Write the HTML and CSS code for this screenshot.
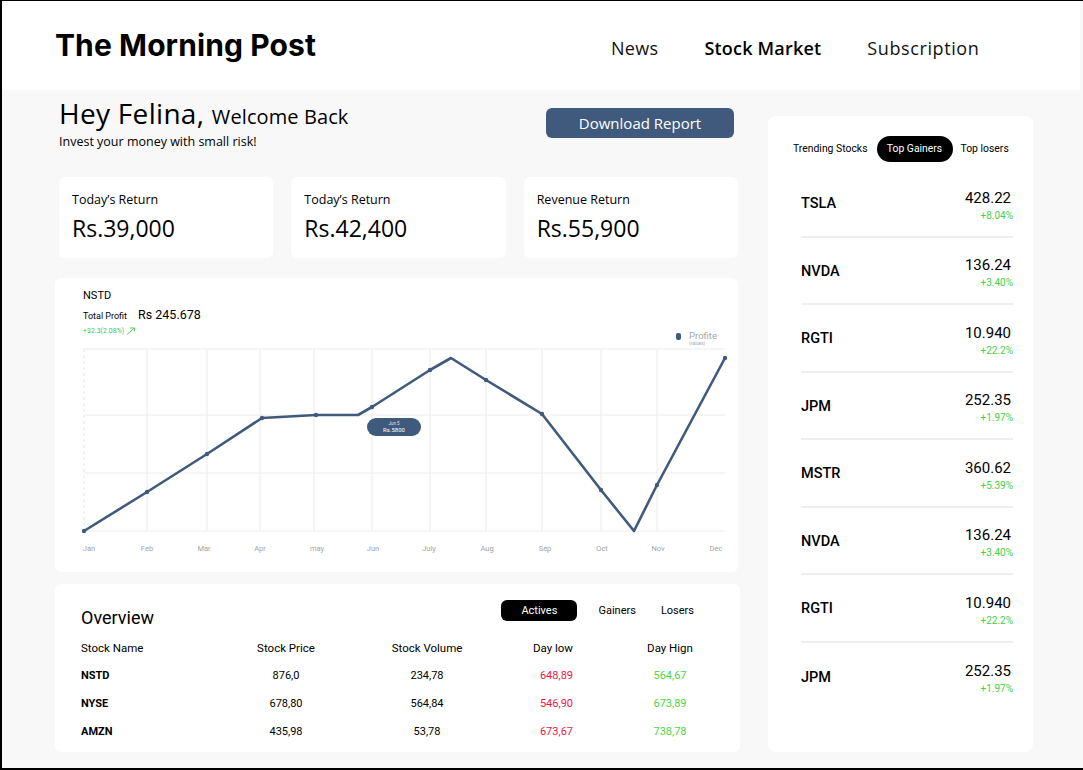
FILE: index.html
```html
<!DOCTYPE html>
<html lang="en">
<head>
<meta charset="utf-8">
<title>The Morning Post</title>
<link rel="stylesheet" href="styles.css">
</head>
<body>
<div class="frame">
  <header class="topbar">
    <div class="brand">The Morning Post</div>
    <nav class="nav">
      <a class="nav-link">News</a>
      <a class="nav-link active">Stock Market</a>
      <a class="nav-link">Subscription</a>
    </nav>
  </header>

  <main class="main">
    <section class="left">
      <div class="greet-row">
        <div class="greet">
          <h1 class="hello">Hey Felina, <span class="welcome">Welcome Back</span></h1>
          <p class="sub">Invest your money with small risk!</p>
        </div>
        <button class="btn">Download Report</button>
      </div>

      <div class="cards">
        <div class="card">
          <div class="card-label">Today’s Return</div>
          <div class="card-value">Rs.39,000</div>
        </div>
        <div class="card">
          <div class="card-label">Today’s Return</div>
          <div class="card-value">Rs.42,400</div>
        </div>
        <div class="card">
          <div class="card-label">Revenue Return</div>
          <div class="card-value">Rs.55,900</div>
        </div>
      </div>

      <div class="chart-card">
        <div class="chart-head">
          <div class="chart-info">
            <div class="ticker">NSTD</div>
            <div class="profit-row"><span class="profit-label">Total Profit</span><span class="profit-value">Rs 245.678</span></div>
            <div class="delta">+32.3(2.08%)
              <svg class="arrow" width="10" height="8" viewBox="0 0 10 8"><path d="M1 7.5 L8.5 1 M4 1 H8.5 V4.5" fill="none" stroke="#46c94a" stroke-width="0.9"/></svg>
            </div>
          </div>
          <div class="legend">
            <span class="legend-mark"></span>
            <div class="legend-text"><div class="legend-title">Profite</div><div class="legend-sub">(values)</div></div>
          </div>
        </div>
        <svg class="plot" width="683" height="224" viewBox="0 0 683 224">
          <g transform="translate(-55,-340)">
            <g stroke="#ececec" stroke-width="1">
              <line x1="84" y1="349" x2="725" y2="349"/>
              <line x1="84" y1="415" x2="725" y2="415"/>
              <line x1="84" y1="473" x2="725" y2="473"/>
              <line x1="84" y1="531" x2="725" y2="531"/>
              <line x1="147" y1="349" x2="147" y2="531"/>
              <line x1="207" y1="349" x2="207" y2="531"/>
              <line x1="260" y1="349" x2="260" y2="531"/>
              <line x1="314" y1="349" x2="314" y2="531"/>
              <line x1="372" y1="349" x2="372" y2="531"/>
              <line x1="430" y1="349" x2="430" y2="531"/>
              <line x1="486" y1="349" x2="486" y2="531"/>
              <line x1="542" y1="349" x2="542" y2="531"/>
              <line x1="601" y1="349" x2="601" y2="531"/>
              <line x1="657" y1="349" x2="657" y2="531"/>
            </g>
            <line x1="84" y1="349" x2="84" y2="531" stroke="#e4e4e4" stroke-width="1" stroke-dasharray="3 3"/>
            <polyline fill="none" stroke="#3f5a7c" stroke-width="2.6" stroke-linejoin="round"
              points="84,531 147,492 207,454 262,418 316,415 358,415 372,407 430,370 451,358 486,380 542,414 601,490 634,531 657,485 725,358"/>
            <g fill="#3f5a7c">
              <circle cx="84" cy="531" r="2.2"/>
              <circle cx="147" cy="492" r="2.2"/>
              <circle cx="207" cy="454" r="2.2"/>
              <circle cx="262" cy="418" r="2.2"/>
              <circle cx="316" cy="415" r="2.2"/>
              <circle cx="372" cy="407" r="2.2"/>
              <circle cx="430" cy="370" r="2.2"/>
              <circle cx="486" cy="380" r="2.2"/>
              <circle cx="542" cy="414" r="2.2"/>
              <circle cx="601" cy="490" r="2.2"/>
              <circle cx="657" cy="485" r="2.2"/>
              <circle cx="725" cy="358" r="2.2"/>
            </g>
            <rect x="367" y="418" width="54" height="18" rx="9" fill="#3f5a7c"/>
            <text x="394" y="424.5" class="tip-small" text-anchor="middle">Jun 5</text>
            <text x="394" y="432" class="tip-big" text-anchor="middle">Rs.5800</text>
            <g class="axis">
              <text x="89" y="551" text-anchor="middle">Jan</text>
              <text x="147" y="551" text-anchor="middle">Feb</text>
              <text x="204" y="551" text-anchor="middle">Mar</text>
              <text x="260" y="551" text-anchor="middle">Apr</text>
              <text x="317" y="551" text-anchor="middle">may</text>
              <text x="373" y="551" text-anchor="middle">Jun</text>
              <text x="429" y="551" text-anchor="middle">July</text>
              <text x="487" y="551" text-anchor="middle">Aug</text>
              <text x="545" y="551" text-anchor="middle">Sep</text>
              <text x="602" y="551" text-anchor="middle">Oct</text>
              <text x="658" y="551" text-anchor="middle">Nov</text>
              <text x="716" y="551" text-anchor="middle">Dec</text>
            </g>
          </g>
        </svg>
      </div>

      <div class="overview">
        <div class="ov-head">
          <h2 class="ov-title">Overview</h2>
          <div class="ov-tabs">
            <span class="ov-tab on">Actives</span>
            <span class="ov-tab">Gainers</span>
            <span class="ov-tab losers">Losers</span>
          </div>
        </div>
        <div class="table">
          <div class="tr th">
            <span class="c1">Stock Name</span><span class="c2">Stock Price</span><span class="c3">Stock Volume</span><span class="c4">Day low</span><span class="c5">Day Hign</span>
          </div>
          <div class="tr">
            <span class="c1 name">NSTD</span><span class="c2">876,0</span><span class="c3">234,78</span><span class="c4 red">648,89</span><span class="c5 green">564,67</span>
          </div>
          <div class="tr">
            <span class="c1 name">NYSE</span><span class="c2">678,80</span><span class="c3">564,84</span><span class="c4 red">546,90</span><span class="c5 green">673,89</span>
          </div>
          <div class="tr">
            <span class="c1 name">AMZN</span><span class="c2">435,98</span><span class="c3">53,78</span><span class="c4 red">673,67</span><span class="c5 green">738,78</span>
          </div>
        </div>
      </div>
    </section>

    <aside class="side">
      <div class="side-tabs">
        <span class="side-tab">Trending Stocks</span>
        <span class="side-tab on">Top Gainers</span>
        <span class="side-tab">Top losers</span>
      </div>
      <ul class="stocks">
        <li class="stock"><span class="sym">TSLA</span><span class="q"><span class="price">428.22</span><span class="chg">+8.04%</span></span></li>
        <li class="stock"><span class="sym">NVDA</span><span class="q"><span class="price">136.24</span><span class="chg">+3.40%</span></span></li>
        <li class="stock"><span class="sym">RGTI</span><span class="q"><span class="price">10.940</span><span class="chg">+22.2%</span></span></li>
        <li class="stock"><span class="sym">JPM</span><span class="q"><span class="price">252.35</span><span class="chg">+1.97%</span></span></li>
        <li class="stock"><span class="sym">MSTR</span><span class="q"><span class="price">360.62</span><span class="chg">+5.39%</span></span></li>
        <li class="stock"><span class="sym">NVDA</span><span class="q"><span class="price">136.24</span><span class="chg">+3.40%</span></span></li>
        <li class="stock"><span class="sym">RGTI</span><span class="q"><span class="price">10.940</span><span class="chg">+22.2%</span></span></li>
        <li class="stock"><span class="sym">JPM</span><span class="q"><span class="price">252.35</span><span class="chg">+1.97%</span></span></li>
      </ul>
    </aside>
  </main>
</div>
</body>
</html>
```

FILE: styles.css
```css
* { box-sizing: border-box; }
html, body { margin: 0; padding: 0; }
body {
  font-family: "Open Sans", "Liberation Sans", sans-serif;
  color: #000;
  background: #f8f8f8;
}
.frame {
  width: 1083px;
  height: 770px;
  border-top: 1px solid #000;
  border-left: 2px solid #000;
  border-bottom: 2px solid #000;
  background: #f8f8f8;
  overflow: hidden;
}
.topbar {
  width: 1078px;
  height: 89px;
  background: #fff;
  display: flex;
  align-items: center;
  padding-left: 53px;
}
.brand {
  font-family: "Inter", sans-serif;
  font-weight: 700;
  font-size: 30px;
  letter-spacing: 0.1px;
  margin-top: -2px;
  width: 556px;
  white-space: nowrap;
}
.nav { display: flex; margin-top: 4px; }
.nav-link {
  font-family: "Open Sans", sans-serif;
  font-size: 18px;
  letter-spacing: 0.3px;
  color: #111;
}
.nav-link.active { font-weight: 600; margin-left: 46px; letter-spacing: 0.2px; color: #000; }
.nav-link:last-child { margin-left: 46px; letter-spacing: 0.6px; }

.main {
  display: flex;
  align-items: flex-start;
  padding-left: 53px;
  gap: 28px;
}
.left { width: 685px; display: flex; flex-direction: column; }

.greet-row {
  display: flex;
  justify-content: space-between;
  align-items: flex-start;
  padding: 7px 6px 0 4px;
  height: 87px;
}
.hello {
  margin: 0;
  font-family: "Open Sans", sans-serif;
  font-weight: 500;
  font-size: 28px;
  line-height: 33px;
  letter-spacing: 0.3px;
}
.welcome { font-size: 20px; font-weight: 400; letter-spacing: 0.1px; }
.sub { margin: 1px 0 0; font-size: 12.5px; line-height: 16px; }
.btn {
  margin-top: 11px;
  width: 188px;
  height: 30px;
  border: 0;
  border-radius: 6px;
  background: #3f5a7c;
  color: #fff;
  font-family: "Open Sans", sans-serif;
  font-size: 15px;
  padding: 0;
}

.cards {
  display: flex;
  gap: 18px;
  padding: 0 2px 0 4px;
}
.card {
  flex: 1;
  height: 81px;
  background: #fff;
  border-radius: 6px;
  padding: 14px 13px 0;
}
.card-label { font-size: 12.5px; line-height: 18px; }
.card-value { font-size: 23px; font-weight: 400; line-height: 34px; margin-top: 2px; }

.chart-card {
  margin-top: 20px;
  width: 683px;
  height: 294px;
  background: #fff;
  border-radius: 6px;
}
.chart-head {
  height: 62px;
  display: flex;
  justify-content: space-between;
  align-items: flex-end;
  padding: 11px 21px 0 28px;
  font-family: "Roboto", sans-serif;
}
.chart-info { align-self: flex-start; }
.ticker { font-size: 11px; line-height: 14px; }
.profit-row { margin-top: 4px; display: flex; align-items: baseline; line-height: 16px; }
.profit-label { font-size: 9px; }
.profit-value { font-size: 12.5px; margin-left: 11px; }
.delta { color: #46c94a; font-size: 7px; line-height: 10px; margin-top: 2px; display: flex; align-items: center; gap: 2px; }
.legend { display: flex; gap: 8px; align-items: flex-start; margin-bottom: -6px; }
.legend-mark { width: 5px; height: 7px; border-radius: 2px; background: #3f5a7c; margin-top: 3px; }
.legend-title { font-size: 9.5px; color: #a8a8a8; line-height: 11px; }
.legend-sub { font-size: 4.5px; color: #a8a8a8; line-height: 5px; }
.plot { display: block; }
.axis text { font-family: "Roboto", sans-serif; font-size: 7.5px; fill: #a4a4a4; }
.tip-small { font-family: "Roboto", sans-serif; font-size: 4.5px; fill: #dfe5ee; }
.tip-big { font-family: "Roboto", sans-serif; font-size: 6px; fill: #fff; }

.overview {
  margin-top: 12px;
  width: 685px;
  height: 168px;
  background: #fff;
  border-radius: 6px;
  font-family: "Roboto", sans-serif;
  padding: 15px 0 0 26px;
}
.ov-head { display: flex; justify-content: space-between; align-items: flex-start; }
.ov-title { margin: 9px 0 0; font-size: 18px; font-weight: 400; line-height: 20px; }
.ov-tabs { display: flex; align-items: center; margin-right: 46px; }
.ov-tab { font-size: 11px; line-height: 21px; }
.ov-tab.on {
  background: #000;
  color: #fff;
  width: 76px;
  height: 21px;
  border-radius: 6px;
  text-align: center;
  margin-right: 21px;
}
.ov-tab.losers { margin-left: 25px; margin-top: 1px; }

.table { margin-top: 7px; }
.tr {
  display: grid;
  grid-template-columns: 145px 120px 162px 65px 37px 120px;
  height: 28px;
  align-items: center;
  font-size: 11px;
}
.th { font-size: 11.5px; height: 26px; }
.c1 { grid-column: 1; }
.c2 { grid-column: 2; text-align: center; }
.c3 { grid-column: 3; text-align: center; }
.c4 { grid-column: 4; text-align: right; }
.c5 { grid-column: 6; text-align: center; }
.name { font-weight: 700; }
.red { color: #f3163f; }
.green { color: #4cd64a; }

.side {
  margin-top: 26px;
  width: 265px;
  height: 636px;
  background: #fff;
  border-radius: 8px;
  font-family: "Roboto", sans-serif;
  padding: 19px 0 0 25px;
}
.side-tabs { display: flex; align-items: center; margin-top: 1px; }
.side-tab { font-size: 10.4px; line-height: 26px; }
.side-tab.on {
  background: #000;
  color: #fff;
  border-radius: 13px;
  width: 76px;
  text-align: center;
  margin: 0 8px 0 9px;
}
.stocks { list-style: none; margin: 8px 0 0; padding: 0; }
.stock {
  height: 67.5px;
  margin: 0 20px 0 8px;
  display: flex;
  justify-content: space-between;
  align-items: center;
  border-bottom: 2px solid #eeeeee;
  padding-left: 0;
}
.stock:last-child { border-bottom: 0; }
.sym { font-size: 14.5px; font-weight: 500; margin-top: 2px; }
.q { display: flex; flex-direction: column; align-items: flex-end; margin-top: 6px; }
.price { font-size: 15px; line-height: 20px; margin-right: 2px; }
.chg { font-size: 10px; color: #46d04a; line-height: 16px; }
```
